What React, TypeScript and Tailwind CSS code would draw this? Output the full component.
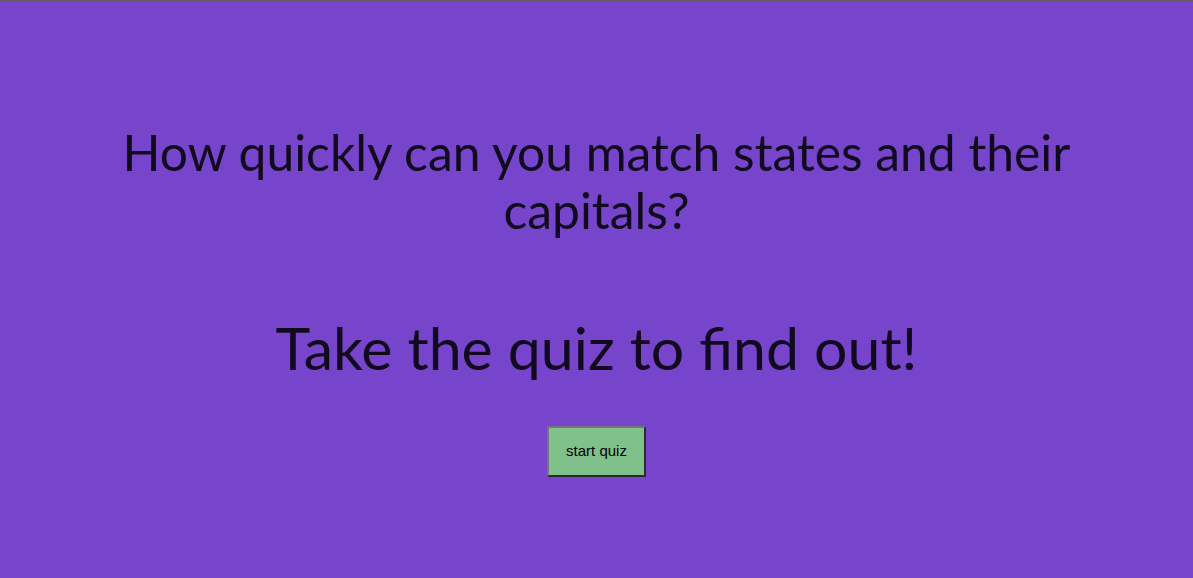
import React from 'react';

const App = () => {
  return (
    <div className="min-h-screen w-full bg-[#7744cc] border-t border-[#5f5f5f] font-['Lato','Noto_Sans',sans-serif] text-[#110a1e]">
      <div className="flex flex-col items-center pt-[122px] text-center">
        {/* Question */}
        <h2 className="max-w-[1000px] text-[49.8px] leading-[58px] font-normal">
          How quickly can you match states and their capitals?
        </h2>

        {/* Call to action */}
        <h1 className="mt-[74px] text-[59px] leading-[70px] font-normal">
          Take the quiz to find out!
        </h1>

        <button className="mt-[43px] w-[99px] h-[51px] bg-[#80c18b] border-2 border-t-[#767676] border-l-[#767676] border-b-[#2b2b2b] border-r-[#2b2b2b] font-['Liberation_Sans',Arial,sans-serif] text-[15px] text-black">
          start quiz
        </button>
      </div>
    </div>
  );
};

export default App;
